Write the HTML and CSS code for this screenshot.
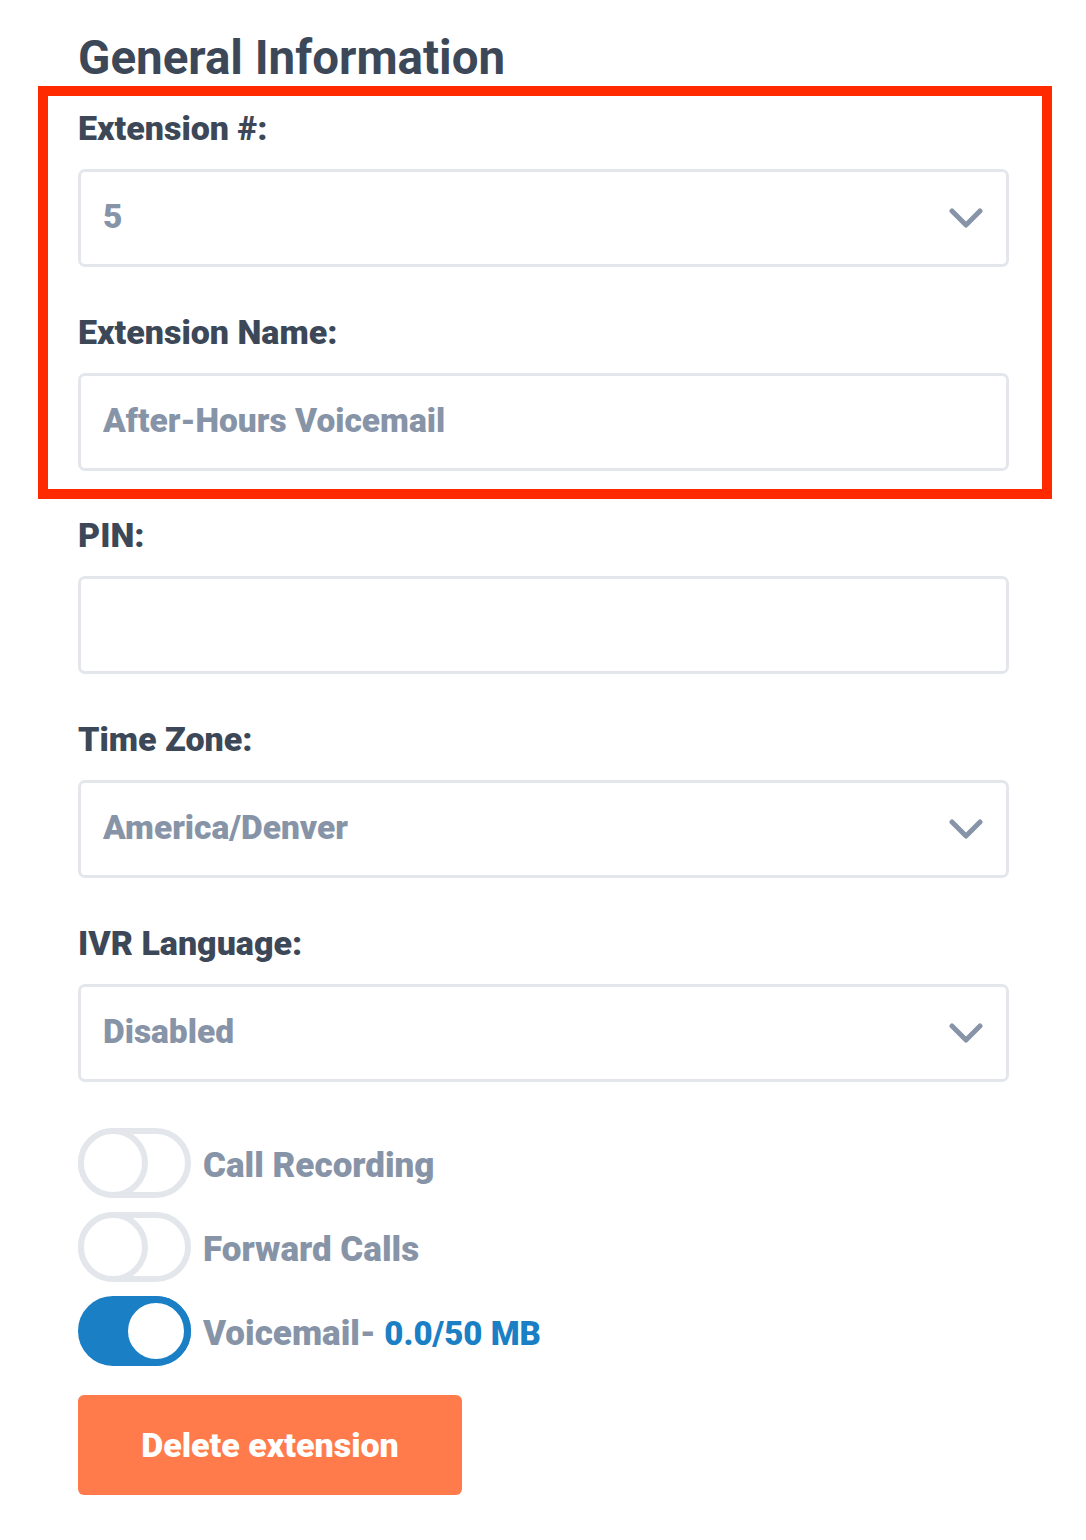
FILE: index.html
```html
<!DOCTYPE html>
<html lang="en">
<head>
    <meta charset="UTF-8">
    <meta name="viewport" content="width=device-width, initial-scale=1.0">
    <title>Extension Settings</title>
    <link rel="stylesheet" href="styles.css">
</head>
<body>
    <div class="page">
        <h2>General Information</h2>

        <!-- Highlighted fields -->
        <div class="highlight">
            <div class="field">
                <label for="extNumber">Extension #:</label>
                <div class="select">
                    <span class="value">5</span>
                    <svg class="chevron" width="34" height="22" viewBox="0 0 34 22"><polyline points="3,4 17,18 31,4" /></svg>
                </div>
            </div>
            <div class="field">
                <label for="extName">Extension Name:</label>
                <div class="input" id="extName"><span class="value">After-Hours Voicemail</span></div>
            </div>
        </div>

        <div class="field">
            <label for="pin">PIN:</label>
            <div class="input" id="pin"></div>
        </div>

        <div class="field">
            <label for="timeZone">Time Zone:</label>
            <div class="select">
                <span class="value">America/Denver</span>
                <svg class="chevron" width="34" height="22" viewBox="0 0 34 22"><polyline points="3,4 17,18 31,4" /></svg>
            </div>
        </div>

        <div class="field">
            <label for="ivrLanguage">IVR Language:</label>
            <div class="select">
                <span class="value">Disabled</span>
                <svg class="chevron" width="34" height="22" viewBox="0 0 34 22"><polyline points="3,4 17,18 31,4" /></svg>
            </div>
        </div>

        <!-- Toggles -->
        <div class="toggles">
            <div class="toggle-row">
                <span class="toggle"><span class="knob"></span></span>
                <span class="toggle-label">Call Recording</span>
            </div>
            <div class="toggle-row">
                <span class="toggle"><span class="knob"></span></span>
                <span class="toggle-label">Forward Calls</span>
            </div>
            <div class="toggle-row">
                <span class="toggle on"><span class="knob"></span></span>
                <span class="toggle-label">Voicemail- <span class="usage">0.0/50 MB</span></span>
            </div>
        </div>

        <button type="button" class="delete-btn">Delete extension</button>
    </div>
</body>
</html>
```

FILE: styles.css
```css
body {
    font-family: 'Roboto', 'Noto Sans', sans-serif;
    font-weight: 900;
    margin: 0;
    padding: 0;
    background: #fff;
    color: #3c4858;
}

.page {
    width: 931px;
    margin-left: 78px;
    padding-top: 30px;
}

h2 {
    font-size: 47.5px;
    line-height: 56px;
    margin: 0;
    color: #3c4858;
}

.highlight {
    border: 10px solid #ff2a00;
    margin: 0 -43px 0 -40px;
    padding: 6px 33px 18px 30px;
}

.field {
    display: flex;
    flex-direction: column;
}

.field + .field {
    margin-top: 39px;
}

.highlight + .field {
    margin-top: 10px;
}

label {
    display: block;
    font-size: 34px;
    line-height: 48px;
    padding-top: 2px;
    margin-bottom: 17px;
}

.input, .select {
    box-sizing: border-box;
    height: 98px;
    border: 3px solid #e3e7ec;
    border-radius: 7px;
    padding: 0 23px 4px 22px;
    display: flex;
    align-items: center;
    justify-content: space-between;
    font-size: 33.5px;
    color: #8794a8;
}

.chevron {
    margin-top: 4px;
}

.chevron polyline {
    fill: none;
    stroke: #8794a8;
    stroke-width: 5;
    stroke-linecap: round;
    stroke-linejoin: round;
}

.toggles {
    margin-top: 46px;
    display: flex;
    flex-direction: column;
    gap: 14px;
}

.toggle-row {
    display: flex;
    align-items: center;
    gap: 12px;
}

.toggle {
    position: relative;
    box-sizing: border-box;
    width: 113px;
    height: 70px;
    border: 6px solid #e3e7ec;
    border-radius: 35px;
    background: #fff;
}

.knob {
    position: absolute;
    top: -6px;
    left: -6px;
    box-sizing: border-box;
    width: 70px;
    height: 70px;
    border: 6px solid #e3e7ec;
    border-radius: 50%;
    background: #fff;
}

.toggle.on {
    background: #1a7fc4;
    border-color: #1a7fc4;
}

.toggle.on .knob {
    left: auto;
    right: -6px;
    border: 7px solid #1a7fc4;
}

.toggle-label {
    font-size: 35px;
    color: #8794a8;
    padding-top: 4px;
}

.usage {
    color: #1a7fc4;
    font-size: 33px;
}

.delete-btn {
    margin-top: 29px;
    width: 384px;
    height: 100px;
    background-color: #ff7b4b;
    color: #fff;
    border: none;
    border-radius: 6px;
    font-family: inherit;
    font-weight: 900;
    font-size: 34px;
    cursor: pointer;
}
```
